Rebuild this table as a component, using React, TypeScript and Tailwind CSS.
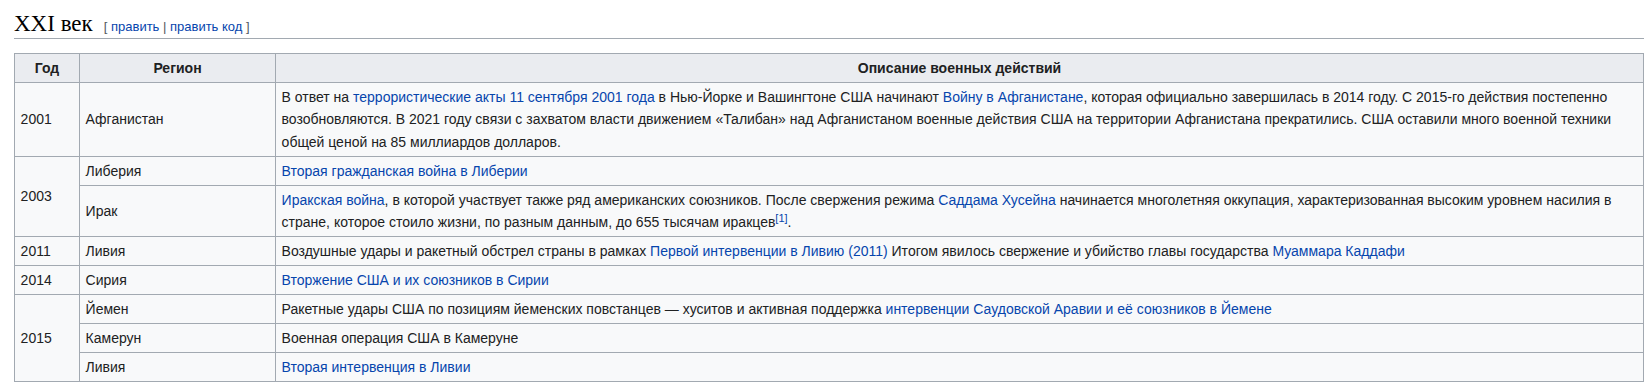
import React from "react";

const A = ({ children }: { children: React.ReactNode }) => (
  <a className="text-[#0645ad] no-underline cursor-pointer">{children}</a>
);

const td = "border border-[#a2a9b1] px-[5.6px] py-[2.8px] align-middle";
const th = "border border-[#a2a9b1] px-[5.6px] py-[2.8px] bg-[#eaecf0] font-bold text-center";

export default function App() {
  return (
    <div className="bg-white w-[1644px] h-[384px] overflow-hidden text-[#202122] font-['Liberation_Sans',Arial,sans-serif]">
      <div className="pl-[14px]">
        <h2 className="flex items-baseline border-b border-[#a2a9b1] pt-[9px] leading-[29px] h-[39px]">
          <span className="font-['Liberation_Serif',serif] text-[23px] text-black">XXI век</span>
          <span className="ml-[11px] text-[13px] text-[#54595d] font-['Liberation_Sans',Arial,sans-serif]">
            [ <A>править</A> | <A>править код</A> ]
          </span>
        </h2>
        <table className="mt-[14px] w-[1630px] table-fixed border-collapse bg-[#f8f9fa] text-[14px] leading-[22.4px]">
          <colgroup>
            <col className="w-[65px]" />
            <col className="w-[196px]" />
            <col />
          </colgroup>
          <thead>
            <tr>
              <th className={th}>Год</th>
              <th className={th}>Регион</th>
              <th className={th}>Описание военных действий</th>
            </tr>
          </thead>
          <tbody>
            <tr>
              <td className={td}>2001</td>
              <td className={td}>Афганистан</td>
              <td className={td}>
                В ответ на <A>террористические акты 11 сентября 2001 года</A> в Нью-Йорке и Вашингтоне США начинают{" "}
                <A>Войну в Афганистане</A>, которая официально завершилась в 2014 году. С 2015-го действия постепенно
                возобновляются. В 2021 году связи с захватом власти движением «Талибан» над Афганистаном военные действия
                США на территории Афганистана прекратились. США оставили много военной техники общей ценой на 85
                миллиардов долларов.
              </td>
            </tr>
            <tr>
              <td className={td} rowSpan={2}>2003</td>
              <td className={td}>Либерия</td>
              <td className={td}>
                <A>Вторая гражданская война в Либерии</A>
              </td>
            </tr>
            <tr>
              <td className={td}>Ирак</td>
              <td className={td}>
                <A>Иракская война</A>, в которой участвует также ряд американских союзников. После свержения режима{" "}
                <A>Саддама Хусейна</A> начинается многолетняя оккупация, характеризованная высоким уровнем насилия в
                стране, которое стоило жизни, по разным данным, до 655 тысячам иракцев
                <sup className="text-[11px]">
                  <A>[1]</A>
                </sup>
                .
              </td>
            </tr>
            <tr>
              <td className={td}>2011</td>
              <td className={td}>Ливия</td>
              <td className={td}>
                Воздушные удары и ракетный обстрел страны в рамках <A>Первой интервенции в Ливию (2011)</A> Итогом
                явилось свержение и убийство главы государства <A>Муаммара Каддафи</A>
              </td>
            </tr>
            <tr>
              <td className={td}>2014</td>
              <td className={td}>Сирия</td>
              <td className={td}>
                <A>Вторжение США и их союзников в Сирии</A>
              </td>
            </tr>
            <tr>
              <td className={td} rowSpan={3}>2015</td>
              <td className={td}>Йемен</td>
              <td className={td}>
                Ракетные удары США по позициям йеменских повстанцев — хуситов и активная поддержка{" "}
                <A>интервенции Саудовской Аравии и её союзников в Йемене</A>
              </td>
            </tr>
            <tr>
              <td className={td}>Камерун</td>
              <td className={td}>Военная операция США в Камеруне</td>
            </tr>
            <tr>
              <td className={td}>Ливия</td>
              <td className={td}>
                <A>Вторая интервенция в Ливии</A>
              </td>
            </tr>
          </tbody>
        </table>
      </div>
    </div>
  );
}
